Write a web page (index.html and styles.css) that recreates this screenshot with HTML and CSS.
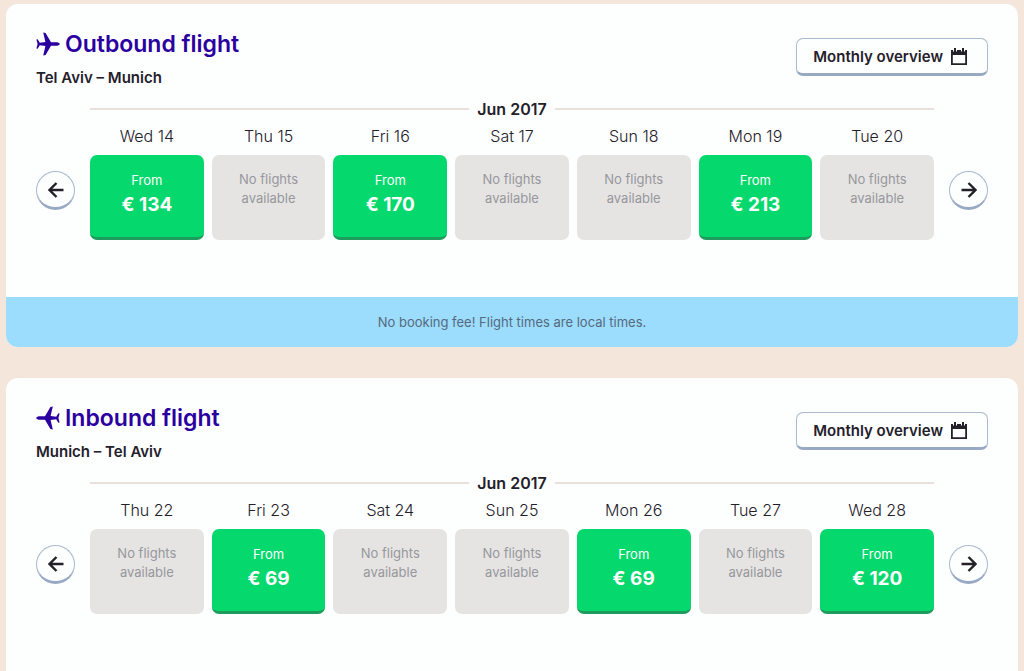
FILE: index.html
```html
<!DOCTYPE html>
<html lang="en">
<head>
<meta charset="utf-8">
<meta name="viewport" content="width=device-width, initial-scale=1">
<title>Select flights</title>
<link rel="stylesheet" href="styles.css">
</head>
<body>
<svg class="sprite" aria-hidden="true">
  <symbol id="plane" viewBox="0 0 24 24"><path d="M23.800 12c0-1.200-2.200-1.800-4-1.800h-4.800L9.600.9 7.200.4l2.200 9.600-5.600.8L1.600 7.200.4 7.400l1.200 4.600-1.200 4.600 1.200.2L3.800 13.200l5.600.8-2.200 9.600 2.400-.5 5.400-9.300h4.800c1.800 0 4-.6 4-1.800z"/></symbol>
  <symbol id="calendar" viewBox="0 0 18 18"><path fill-rule="evenodd" d="M1 3h2v1.500h1V1h2v3.500h1V3h4v1.500h1V1h2v3.500h1V3h2v15H1zM2.800 8v8.200h12.400V8z"/></symbol>
  <symbol id="arrow" viewBox="0 0 16 16"><path d="M15.500 8H2M8.500 1 1.500 8l7 7" fill="none" stroke="currentColor" stroke-width="2.400"/></symbol>
</svg>
<main class="page">
  <section class="card">
    <div class="card-body">
      <header class="card-header">
        <div>
          <h2 class="title"><svg class="plane"><use href="#plane"/></svg>Outbound flight</h2>
          <p class="route">Tel Aviv – Munich</p>
        </div>
        <button class="overview" type="button">Monthly overview<svg class="calendar"><use href="#calendar"/></svg></button>
      </header>
      <h3 class="month">Jun 2017</h3>
      <div class="carousel">
        <button class="nav" type="button" aria-label="Previous days"><svg class="arrow"><use href="#arrow"/></svg></button>
        <ol class="days">
          <li class="day"><span class="date">Wed 14</span><button class="fare" type="button"><span>From</span><strong class="price">€ 134</strong></button></li>
          <li class="day"><span class="date">Thu 15</span><p class="none">No flights available</p></li>
          <li class="day"><span class="date">Fri 16</span><button class="fare" type="button"><span>From</span><strong class="price">€ 170</strong></button></li>
          <li class="day"><span class="date">Sat 17</span><p class="none">No flights available</p></li>
          <li class="day"><span class="date">Sun 18</span><p class="none">No flights available</p></li>
          <li class="day"><span class="date">Mon 19</span><button class="fare" type="button"><span>From</span><strong class="price">€ 213</strong></button></li>
          <li class="day"><span class="date">Tue 20</span><p class="none">No flights available</p></li>
        </ol>
        <button class="nav" type="button" aria-label="Next days"><svg class="arrow flip"><use href="#arrow"/></svg></button>
      </div>
    </div>
    <p class="notice">No booking fee! Flight times are local times.</p>
  </section>

  <section class="card">
    <div class="card-body">
      <header class="card-header">
        <div>
          <h2 class="title"><svg class="plane flip"><use href="#plane"/></svg>Inbound flight</h2>
          <p class="route">Munich – Tel Aviv</p>
        </div>
        <button class="overview" type="button">Monthly overview<svg class="calendar"><use href="#calendar"/></svg></button>
      </header>
      <h3 class="month">Jun 2017</h3>
      <div class="carousel">
        <button class="nav" type="button" aria-label="Previous days"><svg class="arrow"><use href="#arrow"/></svg></button>
        <ol class="days">
          <li class="day"><span class="date">Thu 22</span><p class="none">No flights available</p></li>
          <li class="day"><span class="date">Fri 23</span><button class="fare" type="button"><span>From</span><strong class="price">€ 69</strong></button></li>
          <li class="day"><span class="date">Sat 24</span><p class="none">No flights available</p></li>
          <li class="day"><span class="date">Sun 25</span><p class="none">No flights available</p></li>
          <li class="day"><span class="date">Mon 26</span><button class="fare" type="button"><span>From</span><strong class="price">€ 69</strong></button></li>
          <li class="day"><span class="date">Tue 27</span><p class="none">No flights available</p></li>
          <li class="day"><span class="date">Wed 28</span><button class="fare" type="button"><span>From</span><strong class="price">€ 120</strong></button></li>
        </ol>
        <button class="nav" type="button" aria-label="Next days"><svg class="arrow flip"><use href="#arrow"/></svg></button>
      </div>
    </div>
  </section>
</main>
</body>
</html>
```
FILE: styles.css
```css
* { box-sizing: border-box; }

body {
  margin: 0;
  background: #f4e6da;
  color: #24202a;
  font-family: Inter, "Open Sans", sans-serif;
  font-size: 15px;
}

h2, h3, p, ol { margin: 0; padding: 0; }
ol { list-style: none; }
button { font: inherit; color: inherit; cursor: pointer; }

.sprite { display: none; }
.flip { transform: scaleX(-1); }

.page {
  display: flex;
  flex-direction: column;
  gap: 31px;
  height: 100vh;
  padding: 4px 6px 0;
  overflow: hidden;
}

.card {
  flex: none;
  min-height: 340px;
  overflow: hidden;
  border-radius: 12px;
  background: #fdfefe;
}

.card-body { padding: 24px 30px 57px; }

.card-header {
  display: flex;
  justify-content: space-between;
  align-items: flex-start;
}

.title {
  display: flex;
  align-items: center;
  gap: 5px;
  color: #2b00a0;
  font-size: 23px;
  font-weight: 600;
  line-height: 32px;
}

.plane { width: 24px; height: 24px; fill: currentColor; }

.route {
  padding-top: 8px;
  font-weight: 600;
  line-height: 20px;
}

.overview {
  display: flex;
  align-items: center;
  gap: 7px;
  height: 38px;
  margin-top: 10px;
  padding: 0 19px 0 16px;
  border: 1px solid #a9b9cf;
  border-bottom: 3px solid #98a9c4;
  border-radius: 7px;
  background: #fdfefe;
  font-weight: 600;
}

.calendar { width: 18px; height: 18px; fill: currentColor; }

.month {
  display: flex;
  align-items: center;
  gap: 8px;
  padding: 11px 54px 0;
  font-size: 16px;
  font-weight: 600;
  line-height: 20px;
}

.month::before,
.month::after {
  content: "";
  flex: 1;
  height: 2px;
  background: #e8e1db;
}

.carousel {
  display: flex;
  align-items: flex-end;
  gap: 15px;
}

.days {
  display: grid;
  flex: 1;
  grid-template-columns: repeat(7, 1fr);
  gap: 8px;
}

.day {
  display: flex;
  flex-direction: column;
  text-align: center;
}

.date {
  padding: 7px 0 9px;
  font-size: 16px;
  font-weight: 300;
  line-height: 20px;
}

.fare,
.none {
  height: 85px;
  border-radius: 7px;
  font-size: 13px;
  line-height: 19px;
}

.fare {
  display: flex;
  flex-direction: column;
  align-items: center;
  gap: 3px;
  padding: 16px 8px 0;
  border: 0;
  border-bottom: 3px solid #1d9c5e;
  background: #05d86c;
  color: #fff;
}

.price {
  font-size: 19px;
  font-weight: 700;
  line-height: 24px;
}

.none {
  padding: 15px 20px 0;
  background: #e5e4e3;
  color: #97979c;
}

.nav {
  display: grid;
  place-items: center;
  width: 39px;
  height: 39px;
  margin-bottom: 30px;
  padding: 0;
  border: 1px solid #a9b9cf;
  border-bottom: 3px solid #98a9c4;
  border-radius: 50%;
  background: #fdfefe;
}

.arrow { width: 16px; height: 16px; }

.notice {
  padding: 15px 30px;
  background: #9cddfd;
  color: #56697d;
  font-size: 13px;
  line-height: 20px;
  text-align: center;
}
```
